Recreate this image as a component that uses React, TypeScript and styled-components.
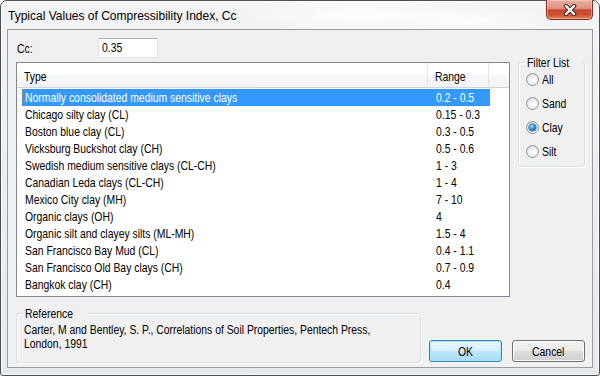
import React from "react";
import styled, { createGlobalStyle } from "styled-components";

const UI = `"Liberation Sans", Arial, sans-serif`;
const TITLE = `"Liberation Sans", Arial, sans-serif`;

const Global = createGlobalStyle`
  html, body { margin: 0; padding: 0; background: #ffffff; }
  body { width: 600px; height: 376px; overflow: hidden; font-family: ${UI}; }
  * { box-sizing: border-box; }
`;

const Window = styled.div`
  width: 600px;
  height: 376px;
  border: 1px solid #4b4f55;
  border-radius: 7px 7px 3px 3px;
  background:
    radial-gradient(ellipse 120px 20px at 360px 14px, rgba(255,255,255,0.9), rgba(255,255,255,0) 100%),
    radial-gradient(ellipse 90px 16px at 470px 20px, rgba(255,255,255,0.8), rgba(255,255,255,0) 100%),
    linear-gradient(180deg, #f1f3f5 0%, #e6e9ec 100%);
  box-shadow: inset 0 0 0 1px rgba(255,255,255,0.75);
  padding: 0 6px 7px 6px;
  display: flex;
  flex-direction: column;
`;

const TitleBar = styled.div`
  height: 28px;
  display: flex;
  justify-content: space-between;
  align-items: flex-start;
`;

const Title = styled.div`
  align-self: center;
  padding: 2px 0 0 1px;
  font-family: ${TITLE};
  font-size: 12px;
  color: #000;
  white-space: nowrap;
`;

const CloseButton = styled.div`
  margin-top: -1px;
  width: 47px;
  height: 20px;
  border: 1px solid #7a2e24;
  border-top: none;
  border-radius: 0 0 5px 5px;
  background: linear-gradient(180deg, #eab0a2 0%, #de8f7d 45%, #c9472d 52%, #cf5132 78%, #e2865a 100%);
  box-shadow: inset 0 0 0 1px rgba(255,220,200,0.45);
  display: flex;
  align-items: center;
  justify-content: center;
`;

/* narrow dialog text (MS Shell Dlg look) */
const Narrow = styled.span<{ $origin?: string; $scale?: number }>`
  display: inline-block;
  white-space: nowrap;
  transform: scaleX(${(p) => p.$scale ?? 0.8});
  transform-origin: ${(p) => p.$origin ?? "left"} center;
`;

const Client = styled.div`
  flex: 1;
  border: 1px solid #979ca3;
  background: #f0f0f0;
  padding: 8px 7px 4px 8px;
  display: flex;
  flex-direction: column;
  font-size: 13px;
  color: #000;
`;

const CcRow = styled.div`
  height: 20px;
  display: flex;
  align-items: center;
  margin-bottom: 4px;
`;

const Label = styled.span`
  width: 82px;
  padding-left: 1px;
`;

const TextBox = styled.div`
  width: 60px;
  height: 20px;
  background: #fff;
  border: 1px solid #e2e3ea;
  border-top-color: #abadb3;
  padding-left: 3px;
  line-height: 18px;
`;

const MainRow = styled.div`
  display: flex;
  align-items: flex-start;
  gap: 8px;
`;

const ListBox = styled.div`
  width: 495px;
  height: 235px;
  border: 1px solid #828790;
  background: #fff;
  display: flex;
  flex-direction: column;
  overflow: hidden;
`;

const Header = styled.div`
  height: 25px;
  flex: none;
  display: flex;
  background: linear-gradient(180deg, #ffffff 0%, #ffffff 45%, #f6f7f9 50%, #f1f2f4 100%);
  border-bottom: 1px solid #d5d5d5;
  margin-bottom: 1px;
`;

const HeaderCell = styled.div<{ $w?: number }>`
  ${(p) => (p.$w ? `width: ${p.$w}px; flex: none;` : "flex: 1;")}
  padding: 4px 0 0 7px;
  border-right: ${(p) => (p.$w ? "1px solid #e3e5e8" : "none")};
  line-height: 19px;
`;

const Rows = styled.div`
  display: flex;
  flex-direction: column;
  padding-left: 5px;
`;

const Row = styled.div<{ $sel?: boolean }>`
  width: 468px;
  height: 17px;
  flex: none;
  display: flex;
  line-height: 15px;
  color: ${(p) => (p.$sel ? "#fff" : "#000")};
  background: ${(p) => (p.$sel ? "#3399ff" : "transparent")};
  border: 1px ${(p) => (p.$sel ? "dotted #c07030" : "solid transparent")};
`;

const TypeCell = styled.div`
  width: 406px;
  flex: none;
  padding-left: 2px;
`;

const RangeCell = styled.div`
  flex: 1;
  min-width: 0;
  padding-left: 7px;
`;

const Group = styled.div<{ $w: number; $h: number }>`
  position: relative;
  flex: none;
  width: ${(p) => p.$w}px;
  height: ${(p) => p.$h}px;
  border: 1px solid #d5dfe5;
  border-radius: 3px;
  box-shadow: inset 1px 1px 0 #ffffff, 1px 1px 0 #ffffff;
`;

const GroupLabel = styled.span`
  position: absolute;
  top: -8px;
  left: 6px;
  padding: 0 2px;
  background: #f0f0f0;
  line-height: 15px;
  display: flex;
`;

const RadioList = styled.div`
  display: flex;
  flex-direction: column;
  padding: 4px 0 0 7px;
`;

const RadioRow = styled.div`
  height: 24px;
  display: flex;
  align-items: center;
  gap: 3px;
`;

const RadioCircle = styled.span<{ $on?: boolean }>`
  width: 13px;
  height: 13px;
  flex: none;
  border-radius: 50%;
  border: 1px solid #8f9295;
  background: radial-gradient(circle at 60% 65%, #ffffff 0%, #f4f4f4 35%, #d2d4d6 100%);
  display: flex;
  align-items: center;
  justify-content: center;
  &::after {
    content: "";
    display: ${(p) => (p.$on ? "block" : "none")};
    width: 7px;
    height: 7px;
    border-radius: 50%;
    background: radial-gradient(circle at 40% 35%, #9fe2ff 0%, #2c8fd6 45%, #0c4c8e 100%);
    box-shadow: 0 0 0 0.5px #1d4f7a;
  }
`;

const BottomRow = styled.div`
  margin-top: 16px;
  display: flex;
  align-items: flex-end;
`;

const RefText = styled.div`
  padding: 9px 0 0 7px;
  font-size: 12px;
  line-height: 14px;
  display: flex;
  flex-direction: column;
`;

const Buttons = styled.div`
  display: flex;
  gap: 10px;
  margin-left: 8px;
  margin-bottom: 1px;
`;

const Button = styled.div<{ $def?: boolean }>`
  width: 73px;
  height: 22px;
  border-radius: 3px;
  border: 1px solid ${(p) => (p.$def ? "#3c7fb1" : "#707070")};
  background: ${(p) =>
    p.$def
      ? "linear-gradient(180deg, #eaf6fd 0%, #d9f0fc 48%, #bee6fd 52%, #a7d9f5 100%)"
      : "linear-gradient(180deg, #f2f2f2 0%, #ebebeb 48%, #dddddd 52%, #cfcfcf 100%)"};
  box-shadow: inset 0 0 0 1px ${(p) => (p.$def ? "rgba(160,230,255,0.9)" : "rgba(255,255,255,0.8)")};
  display: flex;
  align-items: center;
  justify-content: center;
`;

const rows: [string, string][] = [
  ["Normally consolidated medium sensitive clays", "0.2 - 0.5"],
  ["Chicago silty clay (CL)", "0.15 - 0.3"],
  ["Boston blue clay (CL)", "0.3 - 0.5"],
  ["Vicksburg Buckshot clay (CH)", "0.5 - 0.6"],
  ["Swedish medium sensitive clays (CL-CH)", "1 - 3"],
  ["Canadian Leda clays (CL-CH)", "1 - 4"],
  ["Mexico City clay (MH)", "7 - 10"],
  ["Organic clays (OH)", "4"],
  ["Organic silt and clayey silts (ML-MH)", "1.5 - 4"],
  ["San Francisco Bay Mud (CL)", "0.4 - 1.1"],
  ["San Francisco Old Bay clays (CH)", "0.7 - 0.9"],
  ["Bangkok clay (CH)", "0.4"],
];

const filters = ["All", "Sand", "Clay", "Silt"];

export default function App() {
  return (
    <>
      <Global />
      <Window>
        <TitleBar>
          <Title>Typical Values of Compressibility Index, Cc</Title>
          <CloseButton>
            <svg width="14" height="12" viewBox="0 0 14 12">
              <path d="M3 2 L11 10 M11 2 L3 10" stroke="#4a2a26" strokeWidth="4.4" strokeLinecap="round" />
              <path d="M3 2 L11 10 M11 2 L3 10" stroke="#ffffff" strokeWidth="2.4" strokeLinecap="round" />
            </svg>
          </CloseButton>
        </TitleBar>
        <Client>
          <CcRow>
            <Label><Narrow>Cc:</Narrow></Label>
            <TextBox><Narrow>0.35</Narrow></TextBox>
          </CcRow>
          <MainRow>
            <ListBox>
              <Header>
                <HeaderCell $w={411}><Narrow>Type</Narrow></HeaderCell>
                <HeaderCell $w={61}><Narrow>Range</Narrow></HeaderCell>
                <HeaderCell />
              </Header>
              <Rows>
                {rows.map(([t, r], i) => (
                  <Row key={t} $sel={i === 0}>
                    <TypeCell><Narrow>{t}</Narrow></TypeCell>
                    <RangeCell><Narrow>{r}</Narrow></RangeCell>
                  </Row>
                ))}
              </Rows>
            </ListBox>
            <Group $w={67} $h={105}>
              <GroupLabel><Narrow>Filter List</Narrow></GroupLabel>
              <RadioList>
                {filters.map((f) => (
                  <RadioRow key={f}>
                    <RadioCircle $on={f === "Clay"} />
                    <Narrow>{f}</Narrow>
                  </RadioRow>
                ))}
              </RadioList>
            </Group>
          </MainRow>
          <BottomRow>
            <Group $w={405} $h={50}>
              <GroupLabel><Narrow>Reference</Narrow></GroupLabel>
              <RefText>
                <Narrow $scale={0.865}>Carter, M and Bentley, S. P., Correlations of Soil Properties, Pentech Press,</Narrow>
                <Narrow $scale={0.865}>London, 1991</Narrow>
              </RefText>
            </Group>
            <Buttons>
              <Button $def><Narrow $origin="center">OK</Narrow></Button>
              <Button><Narrow $origin="center">Cancel</Narrow></Button>
            </Buttons>
          </BottomRow>
        </Client>
      </Window>
    </>
  );
}
